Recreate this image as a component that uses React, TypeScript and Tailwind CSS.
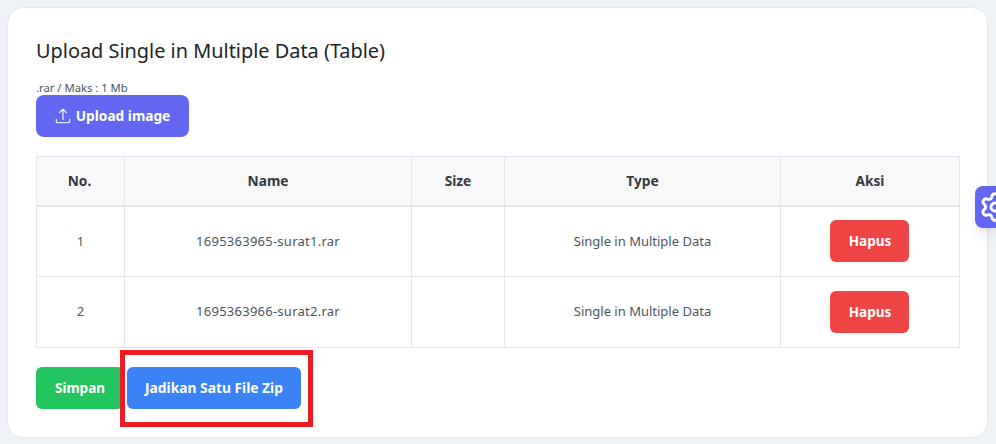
import { Settings } from 'lucide-react';

const rows = [
  { no: 1, name: '1695363965-surat1.rar', type: 'Single in Multiple Data' },
  { no: 2, name: '1695363966-surat2.rar', type: 'Single in Multiple Data' },
];

const fontStack = "font-['Noto_Sans','Open_Sans',sans-serif]";

export default function App() {
  return (
    <div className={`relative h-[444px] w-[996px] overflow-hidden bg-[#eef2f7] pl-[7px] pt-[7px] ${fontStack}`}>
      <div className="h-[431px] w-[981px] rounded-2xl border border-[#e2e8f0] bg-white px-[28px] pt-[28px]">
        <h1 className="h-[30px] text-[19.9px] leading-[30px] text-[#212529]">Upload Single in Multiple Data (Table)</h1>

        <p className="mt-[14px] h-[15px] text-[11.25px] leading-[15px] text-[#4b5563]">.rar / Maks : 1 Mb</p>
        <button className="flex h-[42px] w-[153px] items-center justify-center gap-[4px] rounded-lg bg-[#6366f1] pr-[1px] text-[13.7px] font-bold text-white">
          <svg viewBox="0 0 24 24" fill="none" stroke="currentColor" strokeWidth={1.5} strokeLinecap="round" strokeLinejoin="round" className="h-[18px] w-[18px]">
            <path d="M3 16.5v2.25A2.25 2.25 0 0 0 5.25 21h13.5A2.25 2.25 0 0 0 21 18.75V16.5m-13.5-9L12 3m0 0l4.5 4.5M12 3v13.5" />
          </svg>
          Upload image
        </button>

        {/* Table */}
        <table className="mt-[19px] w-[923px] table-fixed border-collapse text-[13px] text-[#4b5563]">
          <thead>
            <tr className="h-[49px] border-b-2 border-[#e2e5ea] bg-[#f7f8fa] text-[13.7px] font-bold text-[#343a40]">
              <th className="w-[88px] border border-[#e2e5ea] pr-[2px] pt-[2px]">No.</th>
              <th className="w-[287px] border border-[#e2e5ea] pt-[2px]">Name</th>
              <th className="w-[93px] border border-[#e2e5ea] pt-[2px]">Size</th>
              <th className="w-[276px] border border-[#e2e5ea] pt-[2px]">Type</th>
              <th className="w-[179px] border border-[#e2e5ea] pt-[2px]">Aksi</th>
            </tr>
          </thead>
          <tbody>
            {rows.map((row) => (
              <tr key={row.no} className="h-[71px] text-center">
                <td className="border border-[#e2e5ea]">{row.no}</td>
                <td className="border border-[#e2e5ea] tracking-[0.25px]">{row.name}</td>
                <td className="border border-[#e2e5ea]"></td>
                <td className="border border-[#e2e5ea]">{row.type}</td>
                <td className="border border-[#e2e5ea]">
                  <button className="ml-[49px] block h-[42px] w-[79px] rounded-md bg-[#ef4444] pl-[1px] text-[13.5px] font-bold text-white">
                    Hapus
                  </button>
                </td>
              </tr>
            ))}
          </tbody>
        </table>

        <div className="mt-[19px] flex gap-[3px]">
          <button className="h-[42px] w-[88px] rounded-md bg-[#22c55e] text-[13.5px] font-bold text-white">Simpan</button>
          <button className="h-[42px] w-[174px] rounded-md bg-[#3b82f6] text-[13.8px] font-bold text-white">
            Jadikan Satu File Zip
          </button>
        </div>
      </div>

      {/* Annotation box */}
      <div className="absolute left-[120px] top-[350px] h-[77px] w-[193px] border-[5px] border-[#ed1c24]" />

      {/* Settings tab */}
      <div className="absolute left-[975px] top-[186px] flex h-[42px] w-[21px] items-center overflow-hidden rounded-l-lg bg-[#6366f1] pl-[4px] shadow-lg">
        <Settings size={32} strokeWidth={2.2} className="shrink-0 text-white" />
      </div>
    </div>
  );
}
